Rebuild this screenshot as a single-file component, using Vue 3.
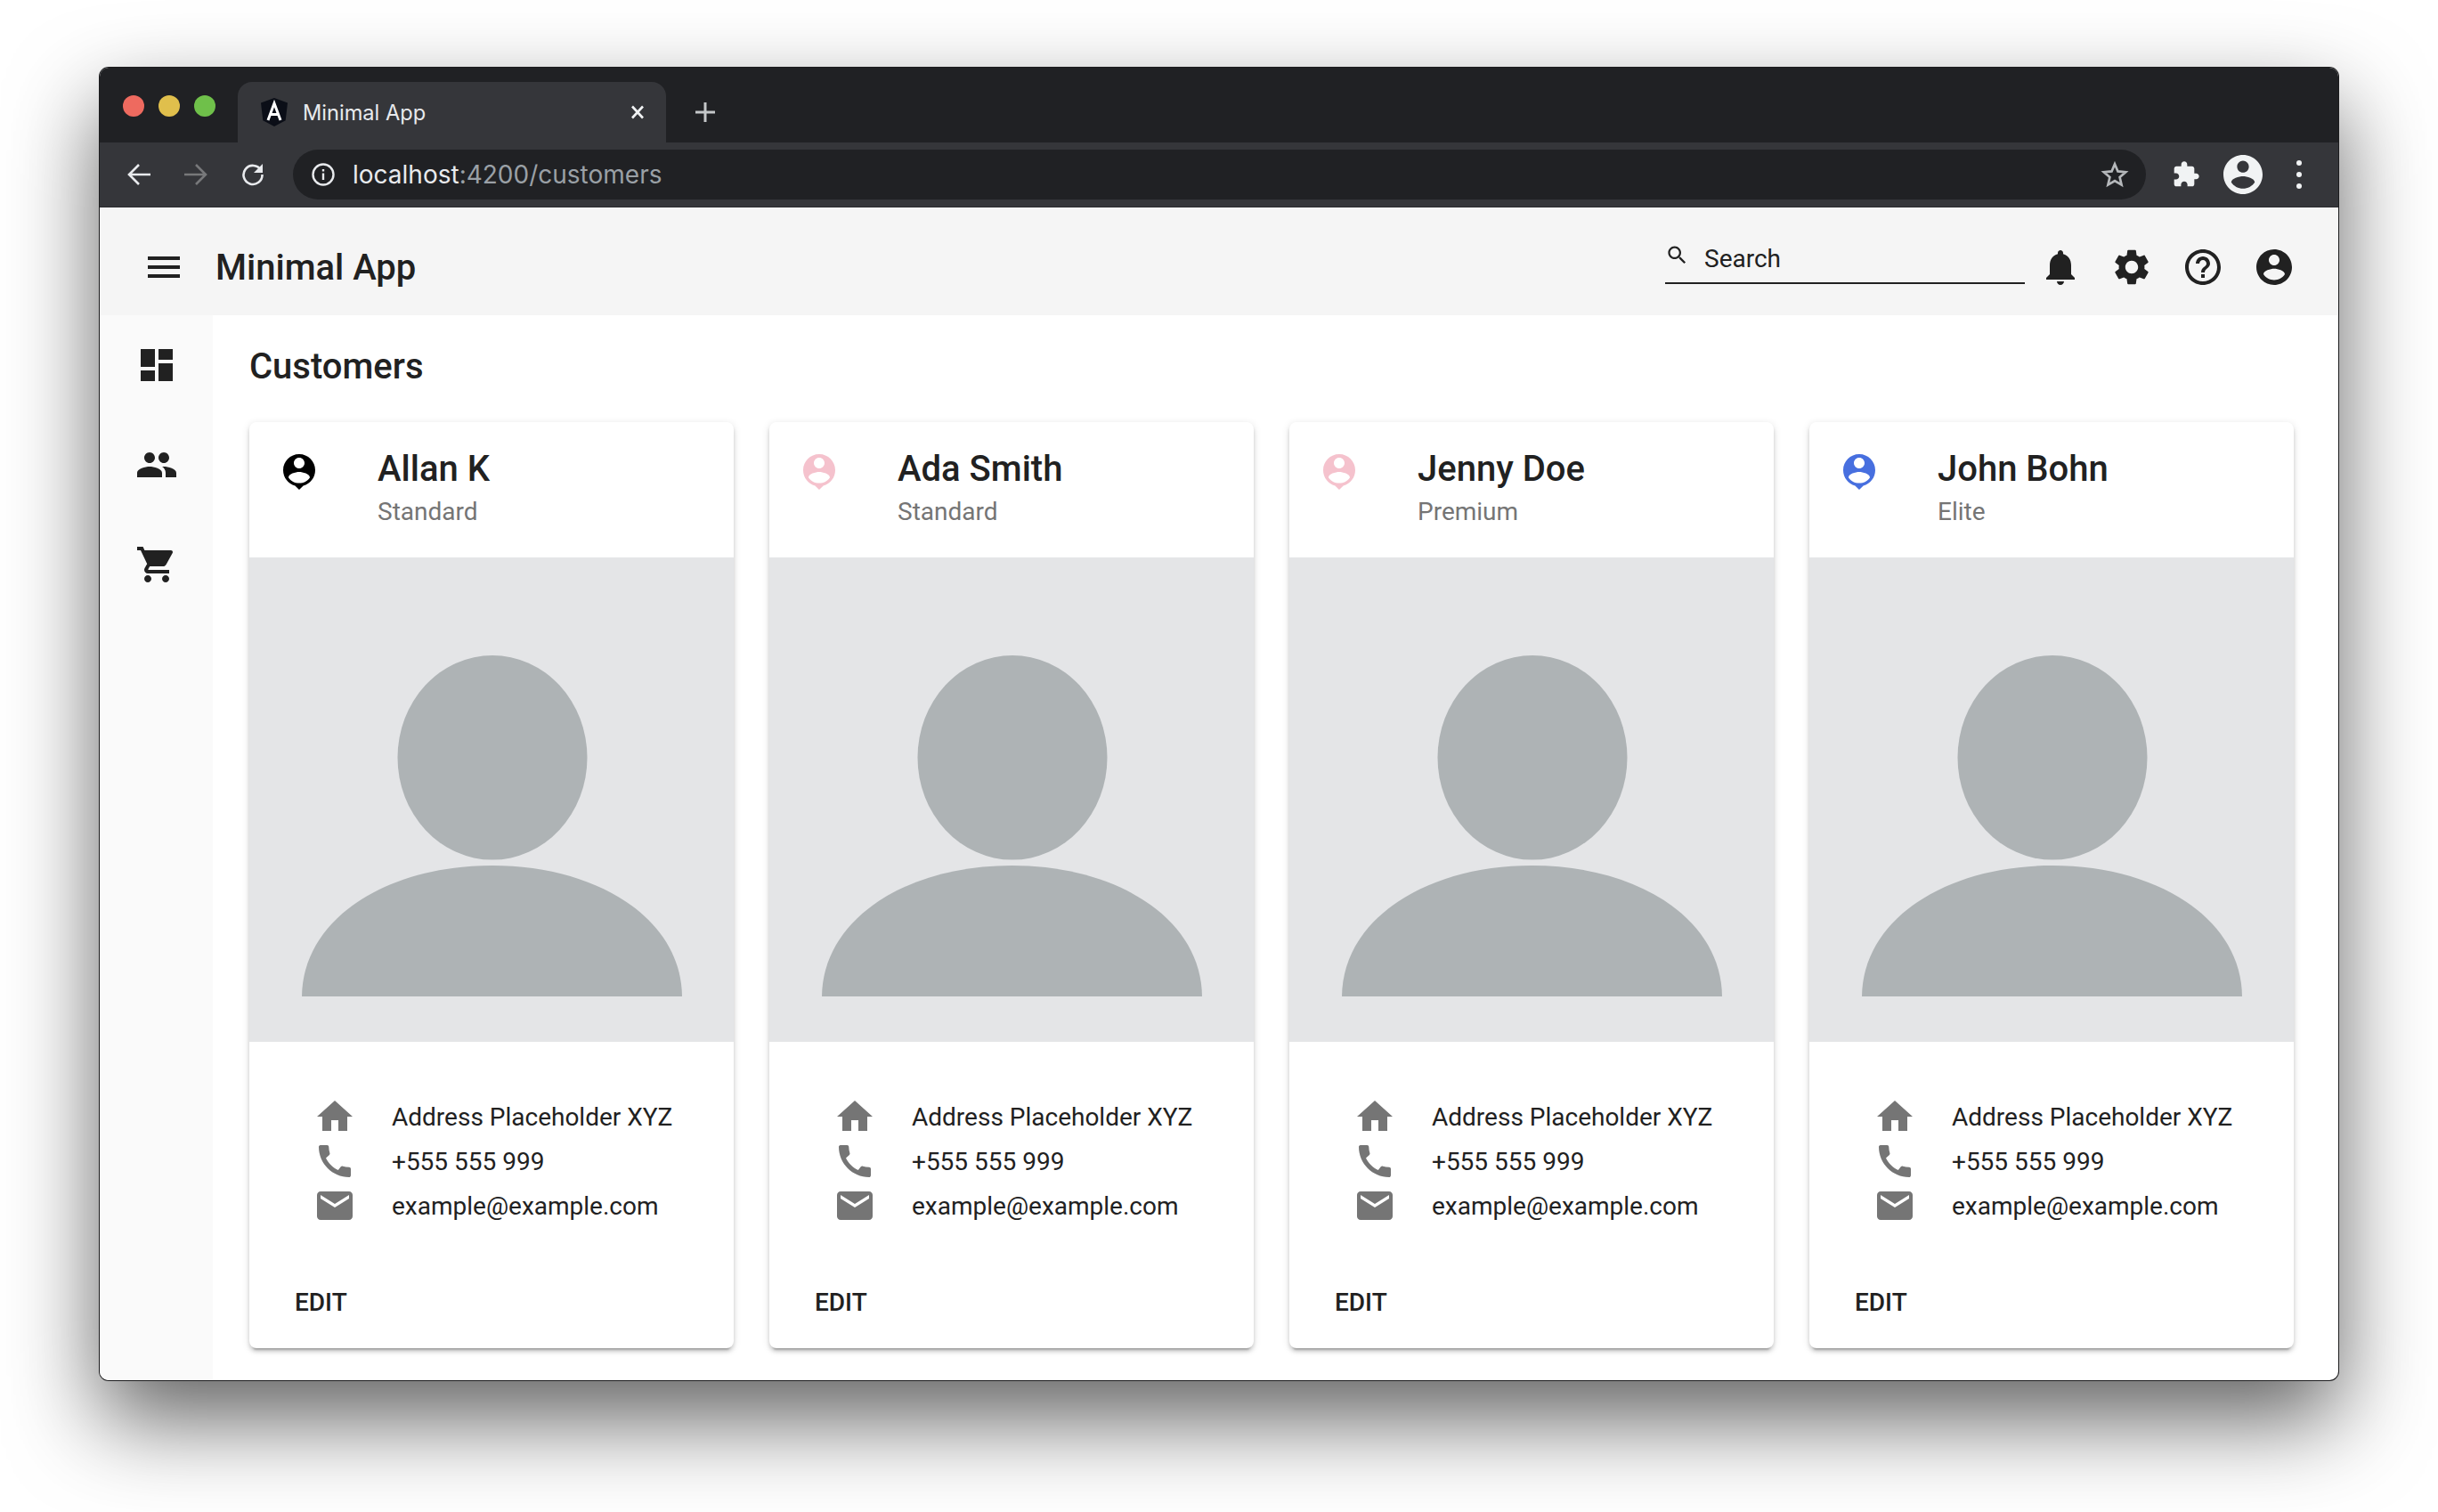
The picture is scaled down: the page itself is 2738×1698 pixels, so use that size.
<script setup>
const icons = {
  menu: 'M3 18h18v-2H3v2zm0-5h18v-2H3v2zm0-7v2h18V6H3z',
  bell: 'M12 22c1.1 0 2-.9 2-2h-4c0 1.1.89 2 2 2zm6-6v-5c0-3.07-1.64-5.64-4.5-6.32V4c0-.83-.67-1.5-1.5-1.5s-1.5.67-1.5 1.5v.68C7.63 5.36 6 7.92 6 11v5l-2 2v1h16v-1l-2-2z',
  gear: 'M19.14 12.94c.04-.3.06-.61.06-.94 0-.32-.02-.64-.07-.94l2.03-1.58c.18-.14.23-.41.12-.61l-1.92-3.32c-.12-.22-.37-.29-.59-.22l-2.39.96c-.5-.38-1.03-.7-1.62-.94l-.36-2.54c-.04-.24-.24-.41-.48-.41h-3.84c-.24 0-.43.17-.47.41l-.36 2.54c-.59.24-1.13.57-1.62.94l-2.39-.96c-.22-.08-.47 0-.59.22L2.74 8.87c-.12.21-.08.47.12.61l2.03 1.58c-.05.3-.09.63-.09.94s.02.64.07.94l-2.03 1.58c-.18.14-.23.41-.12.61l1.92 3.32c.12.22.37.29.59.22l2.39-.96c.5.38 1.03.7 1.62.94l.36 2.54c.05.24.24.41.48.41h3.84c.24 0 .44-.17.47-.41l.36-2.54c.59-.24 1.13-.56 1.62-.94l2.39.96c.22.08.47 0 .59-.22l1.92-3.32c.12-.22.07-.47-.12-.61l-2.01-1.58zM12 15.6c-1.98 0-3.6-1.62-3.6-3.6s1.62-3.6 3.6-3.6 3.6 1.62 3.6 3.6-1.62 3.6-3.6 3.6z',
  help: 'M11 18h2v-2h-2v2zm1-16C6.48 2 2 6.48 2 12s4.48 10 10 10 10-4.48 10-10S17.52 2 12 2zm0 18c-4.41 0-8-3.59-8-8s3.59-8 8-8 8 3.59 8 8-3.59 8-8 8zm0-14c-2.21 0-4 1.79-4 4h2c0-1.1.9-2 2-2s2 .9 2 2c0 2-3 1.75-3 5h2c0-2.25 3-2.5 3-5 0-2.21-1.79-4-4-4z',
  account: 'M12 2C6.48 2 2 6.48 2 12s4.48 10 10 10 10-4.48 10-10S17.52 2 12 2zm0 3c1.66 0 3 1.34 3 3s-1.34 3-3 3-3-1.34-3-3 1.34-3 3-3zm0 14.2c-2.5 0-4.71-1.28-6-3.22.03-1.99 4-3.08 6-3.08 1.99 0 5.97 1.09 6 3.08-1.29 1.94-3.5 3.22-6 3.22z',
  dashboard: 'M3 13h8V3H3v10zm0 8h8v-6H3v6zm10 0h8V11h-8v10zm0-18v6h8V3h-8z',
  people: 'M16 11c1.66 0 2.99-1.34 2.99-3S17.66 5 16 5c-1.66 0-3 1.34-3 3s1.34 3 3 3zm-8 0c1.66 0 2.99-1.34 2.99-3S9.66 5 8 5C6.34 5 5 6.34 5 8s1.34 3 3 3zm0 2c-2.33 0-7 1.17-7 3.5V19h14v-2.5c0-2.33-4.67-3.5-7-3.5zm8 0c-.29 0-.62.02-.97.05 1.16.84 1.97 1.97 1.97 3.45V19h6v-2.5c0-2.33-4.67-3.5-7-3.5z',
  cart: 'M7 18c-1.1 0-1.99.9-1.99 2S5.9 22 7 22s2-.9 2-2-.9-2-2-2zM1 2v2h2l3.6 7.59-1.35 2.45c-.16.28-.25.61-.25.96 0 1.1.9 2 2 2h12v-2H7.42c-.14 0-.25-.11-.25-.25l.03-.12.9-1.63h7.45c.75 0 1.41-.41 1.75-1.03l3.58-6.49c.08-.14.12-.31.12-.48 0-.55-.45-1-1-1H5.21l-.94-2H1zm16 16c-1.1 0-1.99.9-1.99 2s.89 2 1.99 2 2-.9 2-2-.9-2-2-2z',
  home: 'M10 20v-6h4v6h5v-8h3L12 3 2 12h3v8z',
  phone: 'M20.01 15.38c-1.23 0-2.42-.2-3.53-.56-.35-.12-.74-.03-1.01.24l-1.57 1.97c-2.83-1.35-5.48-3.9-6.89-6.83l1.95-1.66c.27-.28.35-.67.24-1.02-.37-1.11-.56-2.3-.56-3.53 0-.54-.45-.99-.99-.99H4.19C3.65 3 3 3.24 3 3.99 3 13.28 10.73 21 20.01 21c.71 0 .99-.63.99-1.18v-3.45c0-.54-.45-.99-.99-.99z',
  email: 'M20 4H4c-1.1 0-1.99.9-1.99 2L2 18c0 1.1.9 2 2 2h16c1.1 0 2-.9 2-2V6c0-1.1-.9-2-2-2zm0 4l-8 5-8-5V6l8 5 8-5v2z',
  pin: 'M12 2c-4.97 0-9 4.03-9 9 0 4.17 2.84 7.67 6.69 8.69L12 22l2.31-2.31C18.16 18.67 21 15.17 21 11c0-4.97-4.03-9-9-9zm0 2c1.66 0 3 1.34 3 3s-1.34 3-3 3-3-1.34-3-3 1.34-3 3-3zm0 14.3c-2.5 0-4.71-1.28-6-3.22.03-1.99 4-3.08 6-3.08 1.99 0 5.97 1.09 6 3.08-1.29 1.94-3.5 3.22-6 3.22z',
  extension: 'M20.5 11H19V7c0-1.1-.9-2-2-2h-4V3.5C13 2.12 11.88 1 10.5 1S8 2.12 8 3.5V5H4c-1.1 0-1.99.9-1.99 2v3.8H3.5c1.49 0 2.7 1.21 2.7 2.7s-1.21 2.7-2.7 2.7H2V20c0 1.1.9 2 2 2h3.8v-1.5c0-1.49 1.21-2.7 2.7-2.7 1.49 0 2.7 1.21 2.7 2.7V22H17c1.1 0 2-.9 2-2v-4h1.5c1.38 0 2.5-1.12 2.5-2.5S21.88 11 20.5 11z',
  search: 'M15.5 14h-.79l-.28-.27C15.41 12.59 16 11.11 16 9.5 16 5.91 13.09 3 9.5 3S3 5.91 3 9.5 5.91 16 9.5 16c1.61 0 3.09-.59 4.23-1.57l.27.28v.79l5 4.99L20.49 19l-4.99-5zm-6 0C7.01 14 5 11.99 5 9.5S7.01 5 9.5 5 14 7.01 14 9.5 11.99 14 9.5 14z',
}

const customers = [
  { name: 'Allan K', tier: 'Standard', color: '#000000' },
  { name: 'Ada Smith', tier: 'Standard', color: '#f5c2cd' },
  { name: 'Jenny Doe', tier: 'Premium', color: '#f5c2cd' },
  { name: 'John Bohn', tier: 'Elite', color: '#476fdf' },
]
</script>

<template>
  <div class="page">
    <div class="window">
      <div class="tabstrip">
        <div class="lights">
          <span class="light red"></span>
          <span class="light yellow"></span>
          <span class="light green"></span>
        </div>
        <div class="tab">
          <svg class="favicon" viewBox="0 0 32 32">
            <path d="M16 0 1 5.4l2.3 19.8L16 32l12.7-6.8L31 5.4z" fill="#0b0e17" />
            <path d="M9 25 16 6l7 19M11.5 18.5h9" fill="none" stroke="#fff" stroke-width="3" />
          </svg>
          <span class="tab-title">Minimal App</span>
          <svg class="tab-close" viewBox="0 0 18 18">
            <path d="M3 2.5l12 13M15 2.5l-12 13" stroke="#f1f3f4" stroke-width="2.6" />
          </svg>
        </div>
        <svg class="new-tab" viewBox="0 0 24 24">
          <path d="M12 1v22M1 12h22" stroke="#c4c7c9" stroke-width="3" />
        </svg>
      </div>

      <div class="browserbar">
        <svg class="nav" viewBox="0 0 28 28">
          <path d="M27 14H3M14 3 3 14l11 11" fill="none" stroke="#e8eaed" stroke-width="2.6" />
        </svg>
        <svg class="nav" viewBox="0 0 28 28">
          <path d="M1 14h24M14 3l11 11-11 11" fill="none" stroke="#77787a" stroke-width="2.6" />
        </svg>
        <svg class="nav reload" viewBox="0 0 28 28">
          <path d="M23 10A10.5 10.5 0 1 0 24.5 15" fill="none" stroke="#e8eaed" stroke-width="2.6" />
          <path d="M25 3v10H15z" fill="#e8eaed" />
        </svg>
        <div class="omnibox">
          <svg class="info" viewBox="0 0 26 26">
            <circle cx="13" cy="13" r="11.5" fill="none" stroke="#e8eaed" stroke-width="2.4" />
            <path d="M11.8 11.5h2.4V19h-2.4zM11.8 7h2.4v2.4h-2.4z" fill="#e8eaed" />
          </svg>
          <span class="url">localhost<span class="url-rest">:4200/customers</span></span>
          <svg class="star" viewBox="0 0 24 24">
            <path d="M12 3.2l2.6 6.1 6.6.6-5 4.3 1.5 6.5L12 17.3l-5.7 3.4 1.5-6.5-5-4.3 6.6-.6z" fill="none" stroke="#b5b8bb" stroke-width="2" />
          </svg>
        </div>
        <svg class="ext" viewBox="0 0 24 24"><path :d="icons.extension" fill="#f1f3f4" /></svg>
        <svg class="avatar" viewBox="2 2 20 20"><path :d="icons.account" fill="#f1f3f4" /></svg>
        <div class="dots"><span></span><span></span><span></span></div>
      </div>

      <header class="appbar">
        <svg class="icon48" viewBox="0 0 24 24"><path :d="icons.menu" /></svg>
        <div class="app-title">Minimal App</div>
        <div class="search">
          <svg class="search-icon" viewBox="0 0 24 24"><path :d="icons.search" /></svg>
          <span>Search</span>
        </div>
        <div class="actions">
          <svg class="icon48" viewBox="0 0 24 24"><path :d="icons.bell" /></svg>
          <svg class="icon48" viewBox="0 0 24 24"><path :d="icons.gear" /></svg>
          <svg class="icon48" viewBox="0 0 24 24"><path :d="icons.help" /></svg>
          <svg class="icon48" viewBox="0 0 24 24"><path :d="icons.account" /></svg>
        </div>
      </header>

      <div class="body">
        <nav class="sidebar">
          <svg class="icon48" viewBox="0 0 24 24"><path :d="icons.dashboard" /></svg>
          <svg class="icon48" viewBox="0 0 24 24"><path :d="icons.people" /></svg>
          <svg class="icon48" viewBox="0 0 24 24"><path :d="icons.cart" /></svg>
        </nav>
        <main class="main">
          <h1 class="heading">Customers</h1>
          <div class="cards">
            <section v-for="c in customers" :key="c.name" class="card">
              <div class="card-head">
                <svg class="icon48" viewBox="0 0 24 24"><path :d="icons.pin" :style="{ fill: c.color }" /></svg>
                <div class="who">
                  <div class="name">{{ c.name }}</div>
                  <div class="tier">{{ c.tier }}</div>
                </div>
              </div>
              <svg class="photo" viewBox="0 0 544 544">
                <rect width="544" height="544" fill="#e4e5e7" />
                <ellipse cx="273" cy="224.8" rx="106.5" ry="114.8" fill="#aeb3b5" />
                <path d="M59 493C60 405 155 346 272.5 346S485 405 486 493Z" fill="#aeb3b5" />
              </svg>
              <div class="info-list">
                <div class="row">
                  <svg class="icon48 grey" viewBox="0 0 24 24"><path :d="icons.home" /></svg>
                  <span>Address Placeholder XYZ</span>
                </div>
                <div class="row">
                  <svg class="icon48 grey" viewBox="0 0 24 24"><path :d="icons.phone" /></svg>
                  <span>+555 555 999</span>
                </div>
                <div class="row">
                  <svg class="icon48 grey" viewBox="0 0 24 24"><path :d="icons.email" /></svg>
                  <span>example@example.com</span>
                </div>
              </div>
              <div class="card-actions"><button class="edit">EDIT</button></div>
            </section>
          </div>
        </main>
      </div>
    </div>
  </div>
</template>

<style>
html, body {
  margin: 0;
  background: #fff;
}
</style>

<style scoped>
.page {
  width: 2738px;
  height: 1698px;
  box-sizing: border-box;
  padding: 76px 112px 148px 112px;
  font-family: Roboto, "Noto Sans", sans-serif;
  color: #212121;
  overflow: hidden;
  display: flex;
}

.window {
  flex: 1;
  display: flex;
  flex-direction: column;
  background: #fff;
  border-radius: 10px;
  overflow: hidden;
  box-shadow: 0 0 0 1px #1c1c1e, 0 44px 100px rgba(0, 0, 0, 0.62);
}

.icon48 {
  width: 48px;
  height: 48px;
  flex: none;
  fill: #212121;
}

.icon48.grey {
  fill: #757575;
}

.tabstrip {
  height: 84px;
  background: #202124;
  display: flex;
  align-items: flex-end;
  flex: none;
}

.lights {
  width: 155px;
  display: flex;
  gap: 16px;
  padding: 0 0 29px 26px;
  box-sizing: border-box;
}

.light {
  width: 24px;
  height: 24px;
  border-radius: 50%;
}

.red { background: #ee6a5f; }
.yellow { background: #e0bf4c; }
.green { background: #6fc04a; }

.tab {
  width: 481px;
  height: 68px;
  box-sizing: border-box;
  padding: 0 23px 0 25px;
  background: #35363a;
  border-radius: 16px 16px 0 0;
  display: flex;
  align-items: center;
  flex: none;
}

.favicon {
  width: 32px;
  height: 32px;
  flex: none;
}

.tab-title {
  margin-left: 16px;
  flex: 1;
  color: #e8eaed;
  font-family: Inter, Roboto, sans-serif;
  font-size: 23.6px;
}

.tab-close {
  width: 18px;
  height: 18px;
}

.new-tab {
  width: 24px;
  height: 24px;
  margin: 0 0 22px 32px;
}

.browserbar {
  height: 72px;
  background: #35363a;
  border-bottom: 1px solid #2b2c2f;
  display: flex;
  align-items: center;
  flex: none;
  padding: 0 32px 0 30px;
}

.nav {
  width: 28px;
  height: 28px;
  margin-right: 36px;
  flex: none;
}

.reload {
  margin-top: -2px;
}

.omnibox {
  width: 2081px;
  height: 56px;
  margin-left: -5px;
  background: #202124;
  border-radius: 28px;
  display: flex;
  align-items: center;
  padding: 0 19px 0 21px;
  box-sizing: border-box;
  flex: none;
}

.info {
  width: 26px;
  height: 26px;
  flex: none;
}

.url {
  margin-left: 20px;
  flex: 1;
  font-family: Inter, Roboto, sans-serif;
  font-size: 28px;
  color: #e8eaed;
}

.url-rest {
  color: #9aa0a6;
}

.star {
  width: 32px;
  height: 32px;
}

.ext {
  width: 32px;
  height: 32px;
  margin-left: 29px;
  flex: none;
}

.avatar {
  width: 44px;
  height: 44px;
  margin-left: 26px;
  flex: none;
}

.dots {
  margin-left: 38px;
  display: flex;
  flex-direction: column;
  gap: 7px;
}

.dots span {
  width: 6px;
  height: 6px;
  border-radius: 50%;
  background: #f1f3f4;
}

.appbar {
  height: 121px;
  box-sizing: border-box;
  flex: none;
  background: #f5f5f5;
  display: flex;
  align-items: center;
  padding: 13px 48px 0 48px;
}

.app-title {
  margin-left: 34px;
  font-size: 40px;
  font-weight: 500;
  flex: 1;
}

.search {
  width: 404px;
  height: 54px;
  margin-top: 19px;
  align-self: flex-start;
  box-sizing: border-box;
  border-bottom: 2px solid #212121;
  display: flex;
  align-items: center;
  font-size: 28px;
}

.search span {
  margin-top: -2px;
}

.search-icon {
  width: 27px;
  height: 27px;
  margin-right: 17px;
  margin-top: -10px;
  fill: #212121;
}

.actions {
  margin-left: 16px;
  display: flex;
  gap: 32px;
}

.body {
  flex: 1;
  display: flex;
  min-height: 0;
}

.sidebar {
  width: 127px;
  flex: none;
  background: #fafafa;
  display: flex;
  flex-direction: column;
  align-items: center;
  gap: 64px;
  padding-top: 32px;
  box-sizing: border-box;
}

.main {
  flex: 1;
  padding: 34px 0 0 41px;
}

.heading {
  margin: 0 0 38px;
  font-size: 40px;
  line-height: 48px;
  font-weight: 500;
}

.cards {
  display: grid;
  grid-template-columns: repeat(4, 544px);
  gap: 40px;
}

.card {
  height: 1040px;
  background: #fff;
  border-radius: 8px;
  overflow: hidden;
  box-shadow: 0 6px 2px -4px rgba(0, 0, 0, 0.2), 0 4px 4px rgba(0, 0, 0, 0.14), 0 2px 10px rgba(0, 0, 0, 0.12);
}

.card-head {
  height: 152px;
  box-sizing: border-box;
  padding: 32px 32px 0;
  display: flex;
}

.who {
  margin-left: 64px;
}

.name {
  font-size: 40px;
  line-height: 48px;
  font-weight: 500;
  margin-top: -3px;
}

.tier {
  font-size: 28px;
  line-height: 40px;
  color: #757575;
  margin-top: 4px;
}

.photo {
  width: 544px;
  height: 544px;
  display: block;
}

.info-list {
  padding: 59px 0 0 72px;
}

.row {
  height: 50px;
  display: flex;
  align-items: center;
  font-size: 28px;
  gap: 40px;
}

.card-actions {
  padding: 58px 0 0 32px;
}

.edit {
  height: 50px;
  padding: 0 19px;
  border: 0;
  background: none;
  font-family: inherit;
  font-size: 28px;
  font-weight: 500;
  color: #212121;
}
</style>
